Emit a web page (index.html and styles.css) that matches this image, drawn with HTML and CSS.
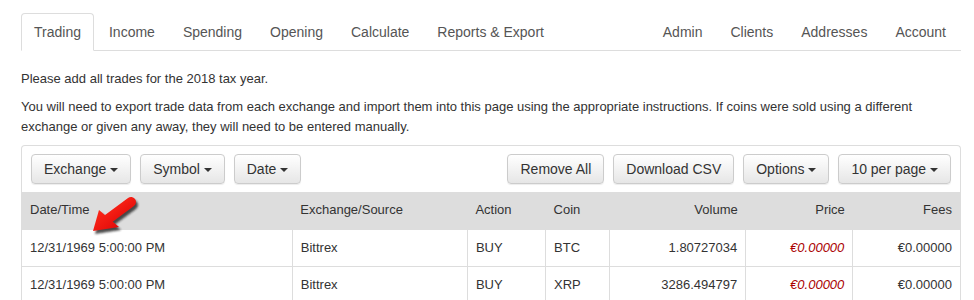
FILE: index.html
```html
<!DOCTYPE html>
<html lang="en">
<head>
    <meta charset="UTF-8">
    <title>Trading</title>
    <link rel="stylesheet" href="styles.css">
</head>
<body>
    <div class="page">
        <ul class="tabs">
            <li class="active"><a href="#">Trading</a></li>
            <li><a href="#">Income</a></li>
            <li><a href="#">Spending</a></li>
            <li><a href="#">Opening</a></li>
            <li><a href="#">Calculate</a></li>
            <li><a href="#">Reports &amp; Export</a></li>
            <li class="push"><a href="#">Admin</a></li>
            <li><a href="#">Clients</a></li>
            <li><a href="#">Addresses</a></li>
            <li><a href="#">Account</a></li>
        </ul>

        <p class="first">Please add all trades for the 2018 tax year.</p>
        <p>You will need to export trade data from each exchange and import them into this page using the appropriate instructions. If coins were sold using a different exchange or given any away, they will need to be entered manually.</p>

        <div class="panel">
            <div class="toolbar">
                <div class="group">
                    <button class="btn">Exchange <span class="caret"></span></button>
                    <button class="btn">Symbol <span class="caret"></span></button>
                    <button class="btn">Date <span class="caret"></span></button>
                </div>
                <div class="group">
                    <button class="btn">Remove All</button>
                    <button class="btn">Download CSV</button>
                    <button class="btn">Options <span class="caret"></span></button>
                    <button class="btn">10 per page <span class="caret"></span></button>
                </div>
            </div>
            <table class="trades">
                <colgroup>
                    <col style="width: 270px">
                    <col style="width: 175px">
                    <col style="width: 78px">
                    <col style="width: 64px">
                    <col style="width: 136px">
                    <col style="width: 107px">
                    <col style="width: 107px">
                </colgroup>
                <thead>
                    <tr>
                        <th>Date/Time</th>
                        <th>Exchange/Source</th>
                        <th>Action</th>
                        <th>Coin</th>
                        <th class="num">Volume</th>
                        <th class="num">Price</th>
                        <th class="num">Fees</th>
                    </tr>
                </thead>
                <tbody>
                    <tr>
                        <td>12/31/1969 5:00:00 PM</td>
                        <td>Bittrex</td>
                        <td>BUY</td>
                        <td>BTC</td>
                        <td class="num">1.80727034</td>
                        <td class="num price">&euro;0.00000</td>
                        <td class="num">&euro;0.00000</td>
                    </tr>
                    <tr>
                        <td>12/31/1969 5:00:00 PM</td>
                        <td>Bittrex</td>
                        <td>BUY</td>
                        <td>XRP</td>
                        <td class="num">3286.494797</td>
                        <td class="num price">&euro;0.00000</td>
                        <td class="num">&euro;0.00000</td>
                    </tr>
                </tbody>
            </table>
        </div>

        <!-- red pointer drawn over the table -->
        <svg class="arrow" width="60" height="48" viewBox="0 0 60 48">
            <defs>
                <filter id="soft" x="-30%" y="-30%" width="160%" height="160%">
                    <feGaussianBlur stdDeviation="1.3"/>
                </filter>
                <linearGradient id="red" x1="0" y1="0" x2="1" y2="1">
                    <stop offset="0" stop-color="#ff2a1a"/>
                    <stop offset="1" stop-color="#e00808"/>
                </linearGradient>
            </defs>
            <g transform="translate(2,3)" fill="#222" stroke="#222" opacity="0.8" filter="url(#soft)">
                <line x1="23" y1="27" x2="46" y2="10" stroke-width="10" stroke-linecap="round"/>
                <polygon points="8,39 14,18 34,35" stroke="none"/>
            </g>
            <g fill="url(#red)" stroke="url(#red)">
                <line x1="23" y1="27" x2="46" y2="10" stroke-width="10" stroke-linecap="round"/>
                <polygon points="8,39 14,18 34,35" stroke="none"/>
            </g>
        </svg>
    </div>
</body>
</html>
```

FILE: styles.css
```css
body {
    margin: 0;
    font-family: "Liberation Sans", Arial, sans-serif;
    font-size: 13px;
    line-height: 20px;
    color: #333;
    background: #fff;
}

.page {
    position: relative;
    padding: 13px 13px 0 21px;
}

.tabs {
    display: flex;
    margin: 0;
    padding: 0;
    list-style: none;
    font-size: 14px;
    border-bottom: 1px solid #ddd;
}

.tabs li {
    margin-bottom: -1px;
}

.tabs li.push {
    margin-left: auto;
}

.tabs a {
    display: block;
    margin-right: 2px;
    padding: 8px 12px;
    border: 1px solid transparent;
    border-radius: 4px 4px 0 0;
    color: #555;
    text-decoration: none;
}

.tabs li.active a {
    border-color: #ddd #ddd transparent;
    background: #fff;
}

p {
    margin: 0 0 8px;
}

p.first {
    margin-top: 18px;
}

.panel {
    margin-top: 8px;
    border: 1px solid #ddd;
    border-bottom: none;
    border-radius: 4px 4px 0 0;
}

.toolbar {
    display: flex;
    justify-content: space-between;
    padding: 8px 9px;
}

.group {
    display: flex;
    gap: 9px;
}

.btn {
    padding: 4px 12px;
    font-family: inherit;
    font-size: 14px;
    line-height: 20px;
    color: #333;
    background: linear-gradient(#fff, #e6e6e6);
    border: 1px solid #ccc;
    border-radius: 4px;
    box-shadow: inset 0 1px 0 rgba(255, 255, 255, .15), 0 1px 1px rgba(0, 0, 0, .075);
}

.caret {
    display: inline-block;
    width: 0;
    height: 0;
    vertical-align: middle;
    border-top: 4px solid #333;
    border-left: 4px solid transparent;
    border-right: 4px solid transparent;
}

.trades {
    width: 100%;
    border-collapse: collapse;
    table-layout: fixed;
}

.trades th {
    padding: 8px;
    text-align: left;
    font-weight: normal;
    background: #ddd;
    border-bottom: 2px solid #ddd;
}

.trades td {
    padding: 8px;
    border-left: 1px solid #ddd;
    border-bottom: 1px solid #ddd;
    white-space: nowrap;
}

.trades td:first-child {
    border-left: none;
}

.trades .num {
    text-align: right;
}

.trades .price {
    font-style: italic;
    color: #a00;
}

.arrow {
    position: absolute;
    left: 85px;
    top: 192px;
}
```
